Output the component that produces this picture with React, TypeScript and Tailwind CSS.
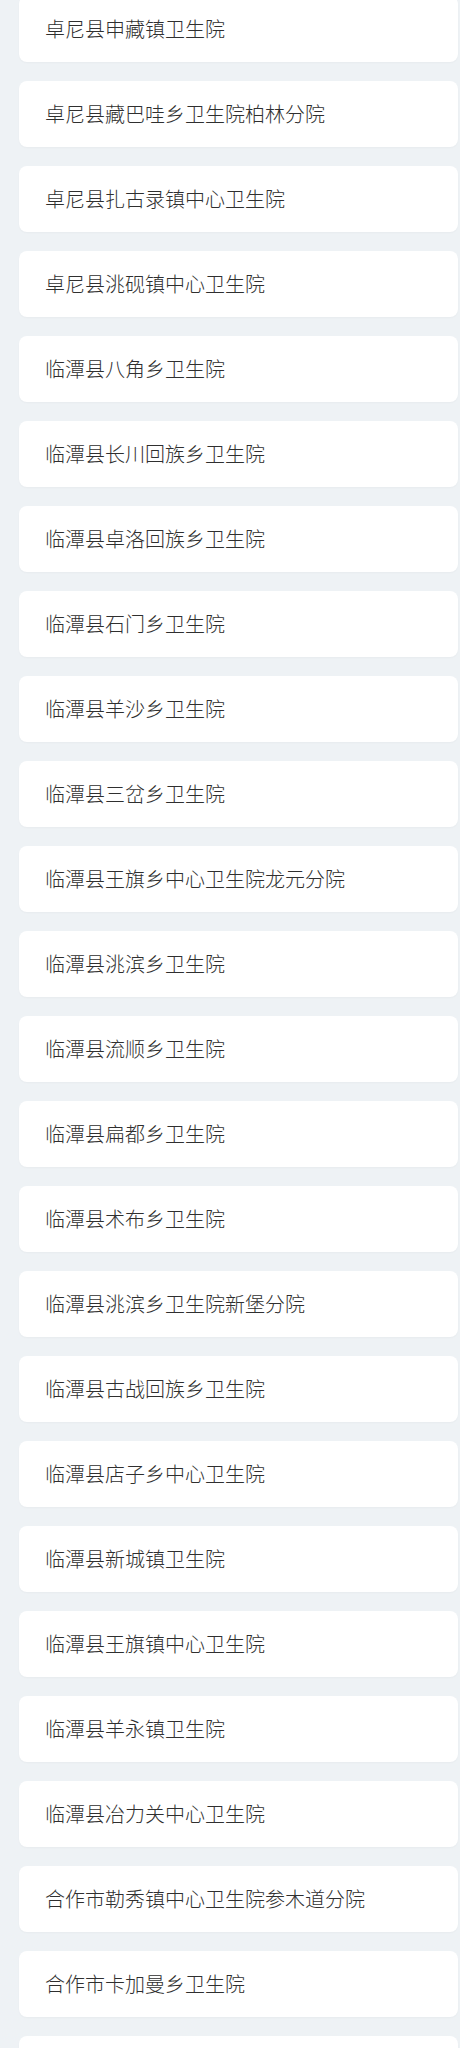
import React from 'react';

const hospitals = [
  '卓尼县申藏镇卫生院',
  '卓尼县藏巴哇乡卫生院柏林分院',
  '卓尼县扎古录镇中心卫生院',
  '卓尼县洮砚镇中心卫生院',
  '临潭县八角乡卫生院',
  '临潭县长川回族乡卫生院',
  '临潭县卓洛回族乡卫生院',
  '临潭县石门乡卫生院',
  '临潭县羊沙乡卫生院',
  '临潭县三岔乡卫生院',
  '临潭县王旗乡中心卫生院龙元分院',
  '临潭县洮滨乡卫生院',
  '临潭县流顺乡卫生院',
  '临潭县扁都乡卫生院',
  '临潭县术布乡卫生院',
  '临潭县洮滨乡卫生院新堡分院',
  '临潭县古战回族乡卫生院',
  '临潭县店子乡中心卫生院',
  '临潭县新城镇卫生院',
  '临潭县王旗镇中心卫生院',
  '临潭县羊永镇卫生院',
  '临潭县冶力关中心卫生院',
  '合作市勒秀镇中心卫生院参木道分院',
  '合作市卡加曼乡卫生院',
  '',
];

const App: React.FC = () => {
  return (
    <div
      className="min-h-[2048px] w-full overflow-hidden bg-[#eef2f5]"
      style={{ fontFamily: '"Noto Sans CJK SC", "Noto Sans", sans-serif' }}
    >
      {/* list is scrolled a few pixels, first card starts above the top */}
      <div className="flex flex-col gap-[19px] pl-[19px] pr-[2px] mt-[-4px]">
        {hospitals.map((name, i) => (
          <div
            key={i}
            className="flex h-[66px] items-center rounded-lg bg-white pl-[26px] shadow-[0_1px_2px_rgba(0,0,0,0.03)]"
          >
            <span className="text-[20px] font-light leading-none text-[#2f2f2f]">{name}</span>
          </div>
        ))}
      </div>
    </div>
  );
};

export default App;
